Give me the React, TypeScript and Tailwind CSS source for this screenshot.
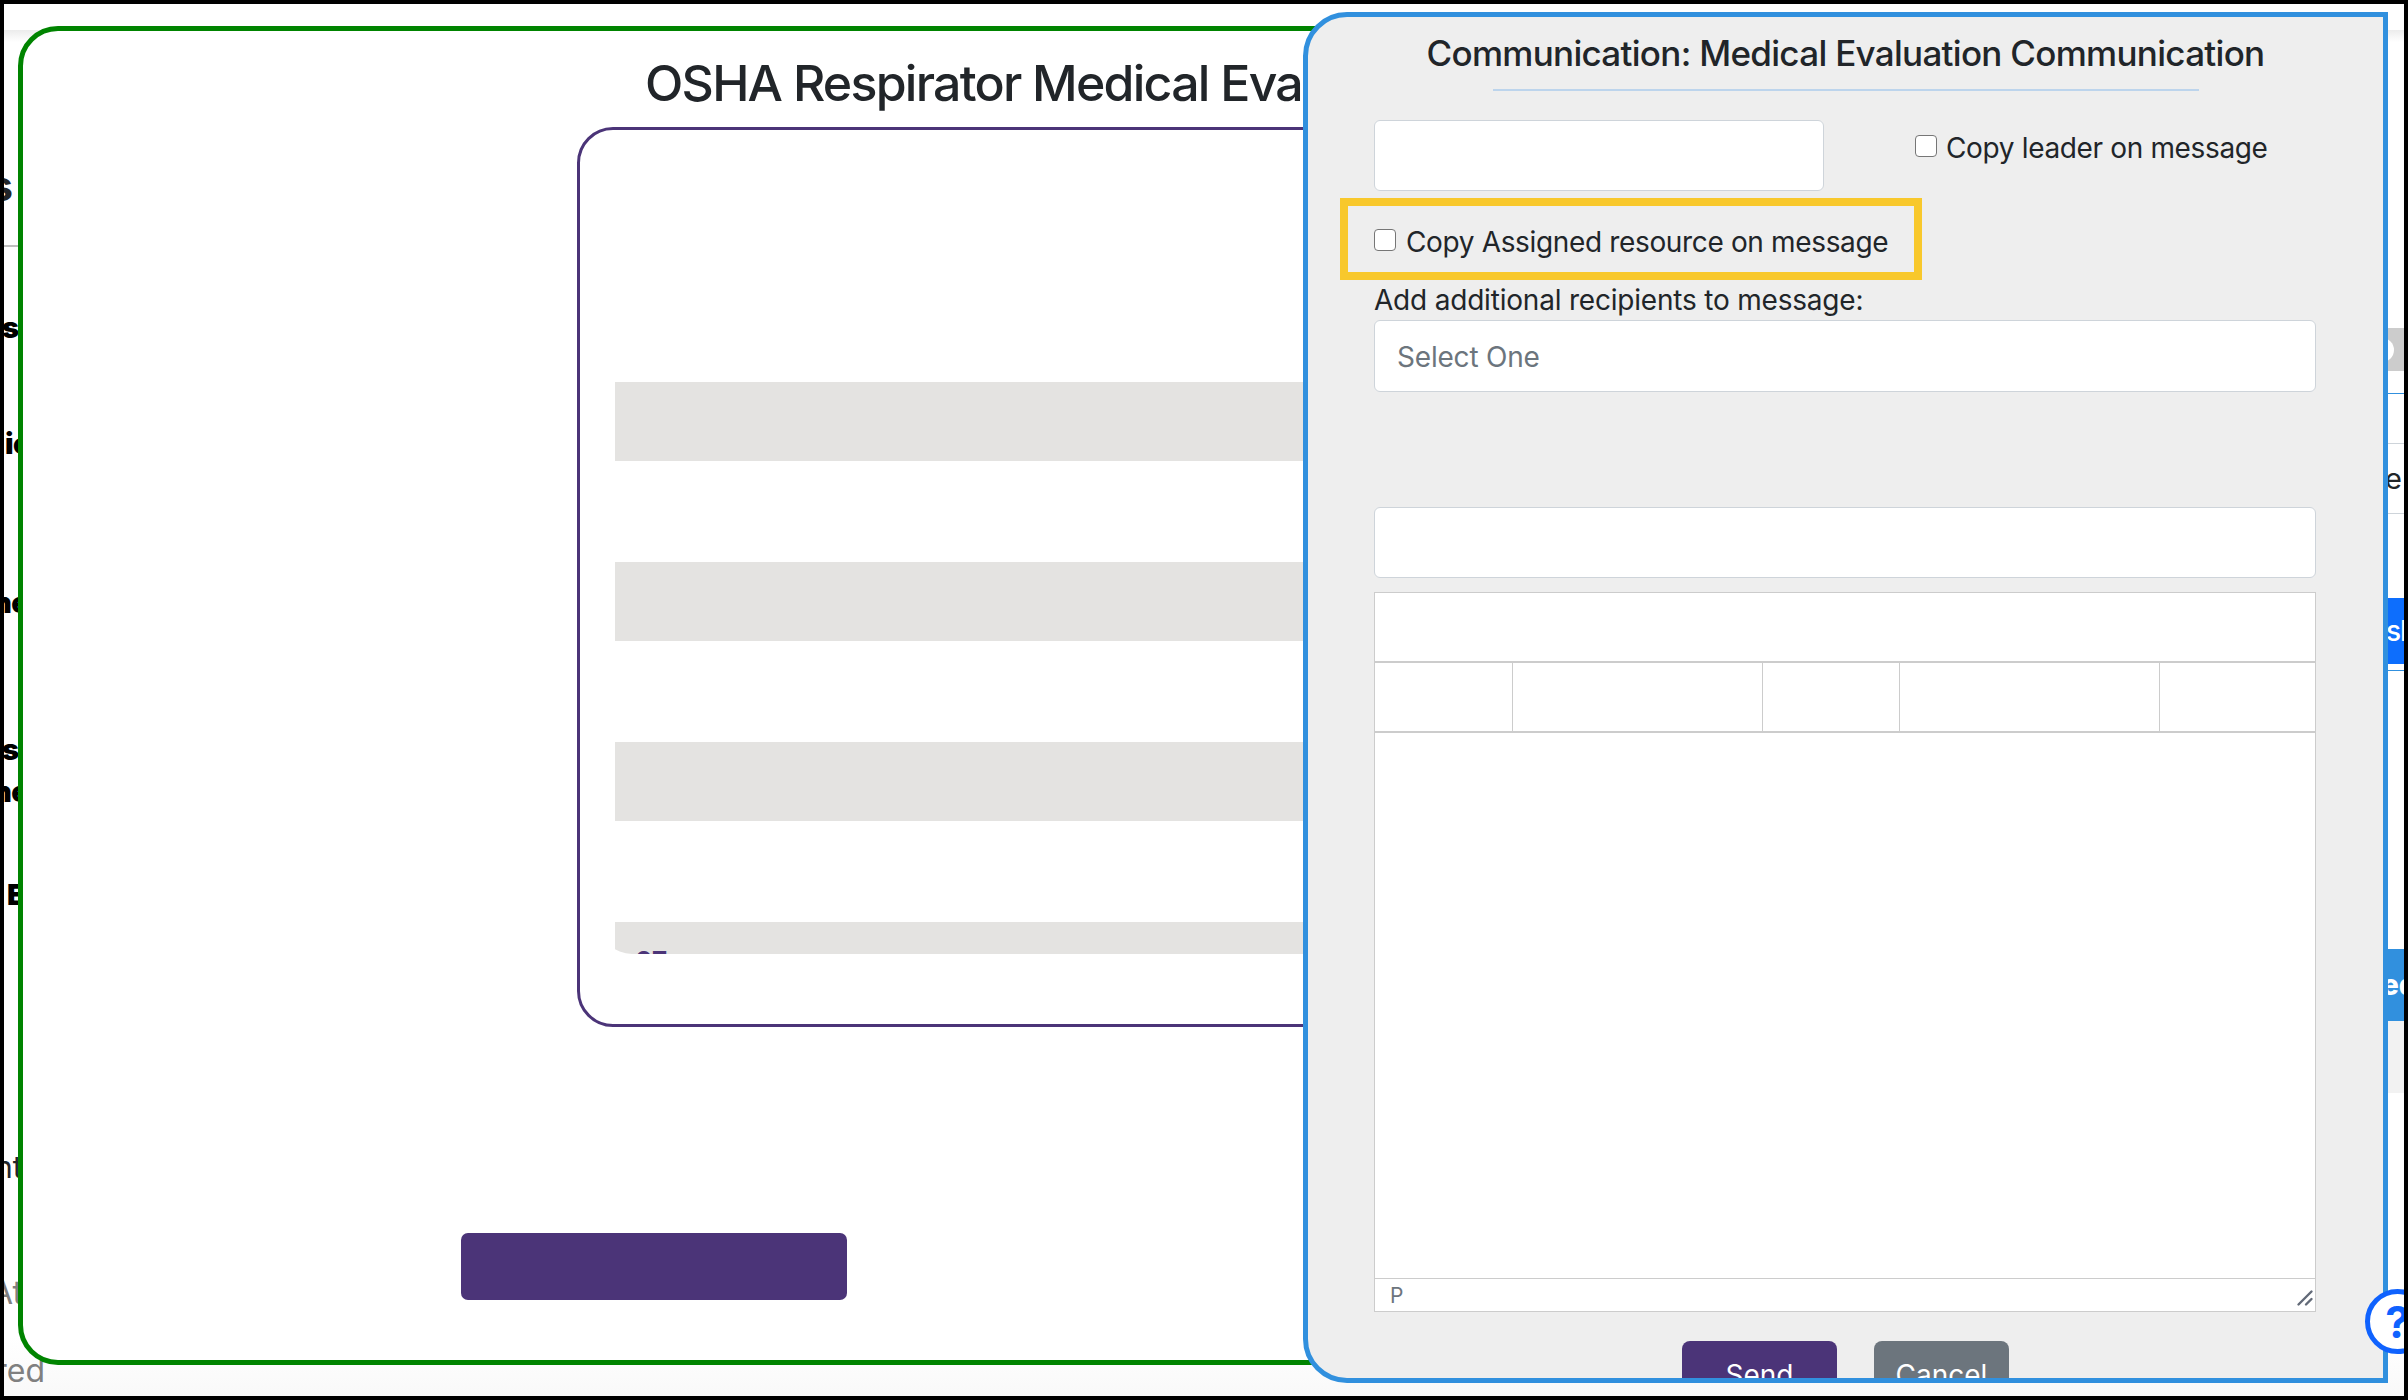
import { useState } from "react";
import clsx from "clsx";

type ClippedProps = {
  className: string;
  children: string;
};

// Text of the page below, cut off by the window frame on one side
const Clipped = ({ className, children }: ClippedProps) => (
  <div className={clsx("flex justify-end whitespace-nowrap", className)}>{children}</div>
);

type CheckProps = {
  label: string;
  className?: string;
  textClass: string;
};

const Check = ({ label, className, textClass }: CheckProps) => {
  const [checked, setChecked] = useState(false);
  return (
    <label className={clsx("flex items-start whitespace-nowrap", className)}>
      <input
        type="checkbox"
        checked={checked}
        onChange={() => setChecked(!checked)}
        className="mt-px size-[22px] shrink-0 appearance-none rounded-[4px] border-[1.5px] border-[#767676] bg-white checked:bg-[#3190de]"
      />
      <span className={textClass}>{label}</span>
    </label>
  );
};

const LeftEdge = () => (
  <div className="flex h-full w-[60px] flex-col text-black">
    <div className="h-[243px] w-[14px] border-b-2 border-[#bfbfbf] pt-[157px]">
      <Clipped className="w-[9px] text-[42px] leading-[50px] font-bold text-[#212529]">s</Clipped>
    </div>
    <div className="flex w-[15px] flex-col text-[29px] leading-[42px] font-black">
      <Clipped className="mt-[60px]">s</Clipped>
      <div className="mt-[74px] flex pl-px tracking-[-0.5px]">ic</div>
      <div className="mt-[117px] flex -ml-[11px] tracking-[-0.5px]">ne</div>
      <Clipped className="mt-[105px]">s</Clipped>
      <div className="flex -ml-[11px] tracking-[-0.5px]">ne</div>
      <div className="mt-[61px] flex pl-[3px]">E</div>
    </div>
    <div className="mt-[230px] -ml-[9px] flex text-[30px] leading-[42px] text-[#212529]">nt</div>
    <div className="mt-[84px] -ml-[13px] flex text-[32px] leading-[42px] text-[#808080]">At</div>
    <Clipped className="mt-[36px] w-[41px] text-[32px] leading-[42px] text-[#808080]">red</Clipped>
  </div>
);

const RightEdge = () => (
  <div className="flex h-full w-4 flex-col overflow-hidden whitespace-nowrap">
    <div className="mt-[324px] flex h-[43px] items-center bg-[#ccc]">
      <div className="-ml-[18px] size-6 shrink-0 rounded-full bg-white" />
    </div>
    <div className="mt-[22px] h-px bg-[#3190de]" />
    <div className="mt-[49px] flex h-[71px] items-center border-y border-[#ced4da] text-[#212529]">
      <span className="-ml-[3px] text-[29px]">e</span>
    </div>
    <div className="mt-[84px] flex h-[66px] items-center bg-[#0d6efd] text-white">
      <span className="-ml-[2px] text-[28px] font-medium tracking-[-1px]">sh</span>
    </div>
    <div className="mt-[6px] h-px bg-[#3190de]" />
    <div className="mt-[278px] flex h-[72px] items-center bg-[#3190de] text-white">
      <span className="-ml-[6px] text-[28px] font-extrabold">ed</span>
    </div>
    <div className="h-[72px] bg-[#f2f2f2]" />
  </div>
);

const EvaluationWindow = () => (
  <section className="absolute top-[22px] left-[14px] h-[1339px] w-[1500px] overflow-hidden rounded-[40px] border-5 border-[#008400] bg-white">
    <h1 className="mt-[19px] ml-[622px] text-[50px] leading-[66px] font-[550] tracking-[-1.75px] whitespace-nowrap text-[#212529]">
      OSHA Respirator Medical Evaluation
    </h1>
    <div className="mt-[11px] ml-[554px] h-[900px] w-[1200px] rounded-[36px] border-3 border-[#4b3478] pt-[27px] pl-[20px]">
      <div className="h-[797px] overflow-hidden rounded-bl-[32px] pt-[225px] pl-[15px]">
        {[1, 2, 3].map((row) => (
          <div key={row} className="mb-[101px] h-[79px] bg-[#e4e3e1]" />
        ))}
        <div className="h-[79px] bg-[#e4e3e1] pt-[23px] pl-[20px] text-[26px] leading-[32px] font-bold text-[#4b3478]">
          07
        </div>
      </div>
    </div>
    <button className="mt-[206px] ml-[438px] block h-[67px] w-[386px] rounded-[7px] bg-[#4b3478]" />
  </section>
);

const Editor = () => (
  <div className="mt-[14px] flex h-[720px] flex-col border border-[#ccc] bg-white">
    <div className="h-[70px] border-b-2 border-[#ccc]" />
    <div className="flex h-[70px] border-b-2 border-[#ccc]">
      <div className="w-[138px] border-r border-[#ccc]" />
      <div className="w-[250px] border-r border-[#ccc]" />
      <div className="w-[137px] border-r border-[#ccc]" />
      <div className="w-[260px] border-r border-[#ccc]" />
    </div>
    <div className="flex-1" />
    <div className="flex h-[33px] items-center justify-between border-t border-[#ccc] pl-[15px] text-[21px] leading-none text-[#6c757d]">
      <span className="mt-px">P</span>
      <svg width="20" height="20" viewBox="0 0 20 20" className="mt-[6px]" stroke="#626a78" strokeWidth="2.4" strokeLinecap="round">
        <path d="M3.5 16.5 16.5 3.5M11 16.5l5.5-5.5" />
      </svg>
    </div>
  </div>
);

const CommunicationDialog = () => (
  <section className="absolute top-2 left-[1299px] h-[1371px] w-[1085px] overflow-hidden rounded-l-[44px] border-5 border-[#3190de] bg-[#eee] text-[28px] text-[#212529]">
    <h2 className="mt-[11px] text-center text-[35px] leading-[50px] font-[550] tracking-[-0.7px] whitespace-nowrap">
      Communication: Medical Evaluation Communication
    </h2>
    <hr className="mx-auto mt-[11px] w-[706px] border-t-2 border-[#bcd4ec]" />
    <div className="mr-[67px] ml-[66px]">
      <div className="mt-[29px] flex">
        <input className="h-[71px] w-[450px] rounded-md border border-[#ced4da] bg-white" />
        <Check
          label="Copy leader on message"
          className="mt-[14px] ml-[91px]"
          textClass="ml-[9px] leading-[28px] tracking-[-0.35px]"
        />
      </div>
      <div className="mt-[7px] -ml-[34px] h-[82px] w-[582px] border-8 border-[#f8c82c] pt-[22px] pl-[26px]">
        <Check
          label="Copy Assigned resource on message"
          textClass="ml-[10px] leading-[29px] tracking-[-0.35px]"
        />
      </div>
      <p className="mt-[1px] leading-[39px] tracking-[-0.2px] whitespace-nowrap">Add additional recipients to message:</p>
      <div className="flex h-[72px] items-center rounded-md border border-[#ced4da] bg-white pt-0.5 pl-[22px] tracking-[-0.2px] text-[#6c757d]">
        Select One
      </div>
      <input className="mt-[115px] block h-[71px] w-full rounded-md border border-[#ced4da] bg-white" />
      <Editor />
    </div>
    <div className="mt-[29px] ml-[374px] flex gap-[37px] text-white">
      <button className="h-[67px] w-[155px] rounded-lg bg-[#4b3478]">Send</button>
      <button className="h-[67px] w-[135px] rounded-lg bg-[#6c757d]">Cancel</button>
    </div>
  </section>
);

const App = () => {
  return (
    <div className="relative h-[1400px] w-[2408px] overflow-hidden border-4 border-black bg-white font-[Inter,'Liberation_Sans',sans-serif]">
      <div className="absolute inset-x-0 top-[26px] h-3 bg-linear-to-b from-[#ececec] to-white" />
      <div className="absolute inset-x-0 bottom-0 h-[60px] bg-linear-to-b from-white to-[#f9f9f9]" />
      <div className="absolute inset-0 flex justify-between">
        <LeftEdge />
        <RightEdge />
      </div>
      <EvaluationWindow />
      <CommunicationDialog />
      <div className="absolute top-[1285px] left-[2361px] flex size-[65px] items-center justify-center rounded-full border-5 border-[#0f62fe] bg-white text-[44px] leading-none font-bold text-[#0f62fe]">
        ?
      </div>
    </div>
  );
};

export default App;
